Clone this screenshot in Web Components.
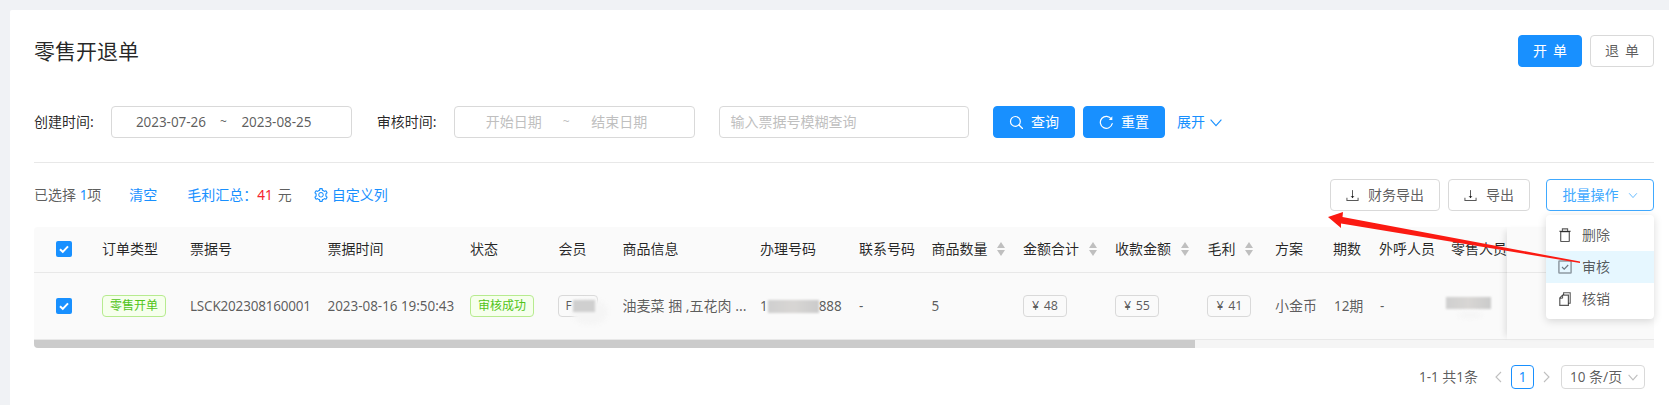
<!DOCTYPE html>
<html lang="zh">
<head>
<meta charset="utf-8">
<title>零售开退单</title>
<style>
  html,body{margin:0;padding:0;height:405px;overflow:hidden;background:#f0f2f5;}
  body{font-family:"Noto Sans","Noto Sans CJK SC",sans-serif;font-size:14px;line-height:22px;color:rgba(0,0,0,.65);}
</style>
</head>
<body>
<retail-page>
  <page-head>
    <span slot="title">零售开退单</span>
    <ui-btn variant="primary" w="64" spaced>开单</ui-btn>
    <ui-btn w="64" spaced>退单</ui-btn>
  </page-head>

  <filter-bar>
    <field-label>创建时间:</field-label>
    <date-range>
      <lat-text slot="start">2023-07-26</lat-text>
      <lat-text slot="end">2023-08-25</lat-text>
    </date-range>
    <field-label gap>审核时间:</field-label>
    <date-range empty>
      <span slot="start">开始日期</span>
      <span slot="end">结束日期</span>
    </date-range>
    <text-box gap placeholder="输入票据号模糊查询"></text-box>
    <ui-btn gap variant="primary" w="82" tight><ui-icon name="search" size="14"></ui-icon>查询</ui-btn>
    <ui-btn mini variant="primary" w="82" tight><ui-icon name="reload" size="14"></ui-icon>重置</ui-btn>
    <text-link expand>展开<ui-icon name="chev" size="14"></ui-icon></text-link>
  </filter-bar>

  <list-toolbar>
    <span slot="info">已选择 <blue-text><lat-text>1</lat-text></blue-text>项</span>
    <blue-text slot="info" style="margin-left:28px">清空</blue-text>
    <span slot="info" style="margin-left:30px"><blue-text>毛利汇总：</blue-text><red-text><lat-text>41</lat-text></red-text><span style="margin-left:5px">元</span></span>
    <blue-text slot="info" style="margin-left:22px;display:inline-flex;align-items:center;gap:4px"><ui-icon name="gear" size="14"></ui-icon>自定义列</blue-text>
    <ui-btn slot="actions" w="110"><ui-icon name="download" size="13"></ui-icon>财务导出</ui-btn>
    <ui-btn slot="actions" w="82"><ui-icon name="download" size="13"></ui-icon>导出</ui-btn>
    <ui-btn slot="actions" w="108" variant="open" style="margin-left:8px">批量操作<ui-icon name="chev" size="10"></ui-icon></ui-btn>
  </list-toolbar>

  <data-table>
    <t-row head>
      <t-cell check><ui-check></ui-check></t-cell>
      <t-cell>订单类型</t-cell>
      <t-cell>票据号</t-cell>
      <t-cell>票据时间</t-cell>
      <t-cell>状态</t-cell>
      <t-cell>会员</t-cell>
      <t-cell>商品信息</t-cell>
      <t-cell>办理号码</t-cell>
      <t-cell>联系号码</t-cell>
      <t-cell sort>商品数量</t-cell>
      <t-cell sort>金额合计</t-cell>
      <t-cell sort>收款金额</t-cell>
      <t-cell sort>毛利</t-cell>
      <t-cell>方案</t-cell>
      <t-cell>期数</t-cell>
      <t-cell>外呼人员</t-cell>
      <t-cell>零售人员</t-cell>
    </t-row>
    <t-row>
      <t-cell check><ui-check></ui-check></t-cell>
      <t-cell><ui-tag tone="green">零售开单</ui-tag></t-cell>
      <t-cell><lat-text style="letter-spacing:-.2px">LSCK202308160001</lat-text></t-cell>
      <t-cell><lat-text style="letter-spacing:-.05px">2023-08-16 19:50:43</lat-text></t-cell>
      <t-cell><ui-tag tone="green">审核成功</ui-tag></t-cell>
      <t-cell style="overflow:visible"><ui-tag w="40" start style="margin-left:-1px">F<blur-patch slot="over" w="36" h="26" l="13" t="3" faint></blur-patch><blur-patch slot="over" w="22" h="12" l="14" t="4"></blur-patch></ui-tag></t-cell>
      <t-cell>油麦菜 捆 ,五花肉 ...</t-cell>
      <t-cell><lat-text>1</lat-text><blur-patch inline w="51" h="13"></blur-patch><lat-text>888</lat-text></t-cell>
      <t-cell><lat-text>-</lat-text></t-cell>
      <t-cell><lat-text>5</lat-text></t-cell>
      <t-cell><ui-tag w="44"><lat-text price>¥ 48</lat-text></ui-tag></t-cell>
      <t-cell><ui-tag w="44"><lat-text price>¥ 55</lat-text></ui-tag></t-cell>
      <t-cell><ui-tag w="44"><lat-text price>¥ 41</lat-text></ui-tag></t-cell>
      <t-cell>小金币</t-cell>
      <t-cell style="padding-left:1px"><lat-text>12</lat-text>期</t-cell>
      <t-cell style="padding-left:1px"><lat-text>-</lat-text></t-cell>
      <t-cell style="overflow:visible"><blur-patch inline w="45" h="12" style="margin-left:-5px;margin-top:-6px"></blur-patch><blur-patch w="24" h="6" l="7" t="39" faint></blur-patch></t-cell>
    </t-row>
  </data-table>

  <pager-bar>
    <lat-text slot="total">1-1</lat-text><span slot="total"> 共</span><lat-text slot="total">1</lat-text><span slot="total">条</span>
    <lat-text slot="page">1</lat-text>
    <span slot="size"><lat-text>10</lat-text> 条/页</span>
  </pager-bar>

  <drop-menu slot="overlay">
    <menu-row icon="trash">删除</menu-row>
    <menu-row icon="checkbox" active>审核</menu-row>
    <menu-row icon="copy">核销</menu-row>
  </drop-menu>
  <note-arrow slot="overlay"></note-arrow>
</retail-page>

<script>
function def(name, css, html, extra){
  class C extends HTMLElement{
    constructor(){
      super();
      const r=this.attachShadow({mode:"open"});
      r.innerHTML="<style>"+css+"</style>"+html;
    }
    connectedCallback(){ if(extra) extra(this); }
  }
  customElements.define(name,C);
}

const ICONS={
  search:'<circle cx="6.4" cy="6.4" r="4.9" fill="none" stroke="currentColor" stroke-width="1.2"/><path d="M10 10l3.6 3.6" fill="none" stroke="currentColor" stroke-width="1.3" stroke-linecap="round"/>',
  reload:'<path d="M12.4 4.1A6 6 0 1 0 13.2 8.6" fill="none" stroke="currentColor" stroke-width="1.2" stroke-linecap="round"/><path d="M13.3 1.3v3.6H9.8z" fill="currentColor"/>',
  chev:'<path d="M1.6 4.6L7 10.6l5.4-6" fill="none" stroke="currentColor" stroke-width="1.1"/>',
  download:'<path d="M7 1.2v8.4" fill="none" stroke="currentColor" stroke-width="1.1"/><path d="M4.9 7.6L7 9.9l2.1-2.3z" fill="currentColor"/><path d="M1 9.4v3h12v-3" fill="none" stroke="currentColor" stroke-width="1.1"/>',
  trash:'<path d="M2.7 3.6h8.6v9.3a.7.7 0 0 1-.7.7H3.4a.7.7 0 0 1-.7-.7z" fill="none" stroke="currentColor" stroke-width="1.2"/><path d="M1.2 3.2h11.6M4.4 3V.9h5.2V3" fill="none" stroke="currentColor" stroke-width="1.1"/>',
  checkbox:'<rect x=".9" y=".9" width="12.2" height="12.2" rx=".6" fill="#e6f7ff" stroke="#8f9aa3" stroke-width="1.5"/><path d="M4 7l2.2 2.2L10.2 5" fill="none" stroke="#6b7680" stroke-width="1.1"/>',
  copy:'<path d="M5.6 3V.8h6.6v10.4h-1.8" fill="none" stroke="currentColor" stroke-width="1.1"/><path d="M4.6 3.2h5.8v10.2H1.8V6z" fill="none" stroke="currentColor" stroke-width="1.2"/><path d="M4.6 3.4v2.8H1.9" fill="none" stroke="currentColor" stroke-width="1"/>'
};
const GEAR='M924.8 625.7l-65.5-56c3.1-19 4.7-38.4 4.7-57.8s-1.6-38.8-4.7-57.8l65.5-56a32.03 32.03 0 0 0 9.3-35.2l-.9-2.6a443.74 443.74 0 0 0-79.7-137.9l-1.8-2.1a32.12 32.12 0 0 0-35.1-9.5l-81.3 28.9c-30-24.6-63.5-44-99.7-57.6l-15.7-85a32.05 32.05 0 0 0-25.8-25.7l-2.7-.5c-52.1-9.4-106.9-9.4-159 0l-2.7.5a32.05 32.05 0 0 0-25.8 25.7l-15.8 85.4a351.86 351.86 0 0 0-99 57.4l-81.9-29.1a32 32 0 0 0-35.1 9.5l-1.8 2.1a446.02 446.02 0 0 0-79.7 137.9l-.9 2.6c-4.5 12.5-.8 26.5 9.3 35.2l66.3 56.6c-3.1 18.8-4.6 38-4.6 57.1 0 19.2 1.5 38.4 4.6 57.1L99 625.5a32.03 32.03 0 0 0-9.3 35.2l.9 2.6c18.1 50.4 44.9 96.9 79.7 137.9l1.8 2.1a32.12 32.12 0 0 0 35.1 9.5l81.9-29.1c29.8 24.5 63.1 43.9 99 57.4l15.8 85.4a32.05 32.05 0 0 0 25.8 25.7l2.7.5a449.4 449.4 0 0 0 159 0l2.7-.5a32.05 32.05 0 0 0 25.8-25.7l15.7-85a350 350 0 0 0 99.7-57.6l81.3 28.9a32 32 0 0 0 35.1-9.5l1.8-2.1c34.8-41.1 61.6-87.5 79.7-137.9l.9-2.6c4.5-12.3.8-26.3-9.3-35zM788.3 465.9c2.5 15.1 3.8 30.6 3.8 46.1s-1.3 31-3.8 46.1l-6.6 40.1 74.7 63.9a370.03 370.03 0 0 1-42.6 73.6L721 702.8l-31.4 25.8c-23.9 19.6-50.5 35-79.3 45.8l-38.1 14.3-17.9 97a377.5 377.5 0 0 1-85 0l-17.9-97.2-37.8-14.5c-28.5-10.8-55-26.2-78.7-45.7l-31.4-25.9-93.4 33.2c-17-22.9-31.2-47.6-42.6-73.6l75.5-64.5-6.5-40c-2.4-14.9-3.7-30.3-3.7-45.5 0-15.3 1.2-30.6 3.7-45.5l6.5-40-75.5-64.5c11.3-26.1 25.6-50.7 42.6-73.6l93.4 33.2 31.4-25.9c23.7-19.5 50.2-34.9 78.7-45.7l37.9-14.3 17.9-97.2c28.1-3.2 56.8-3.2 85 0l17.9 97 38.1 14.3c28.7 10.8 55.4 26.2 79.3 45.8l31.4 25.8 92.8-32.9c17 22.9 31.2 47.6 42.6 73.6L781.8 426l6.5 39.9zM512 326c-97.2 0-176 78.8-176 176s78.8 176 176 176 176-78.8 176-176-78.8-176-176-176zm79.2 255.2A111.6 111.6 0 0 1 512 614c-29.9 0-58-11.7-79.2-32.8A111.6 111.6 0 0 1 400 502c0-29.9 11.7-58 32.8-79.2C454 401.6 482.1 390 512 390c29.9 0 58 11.6 79.2 32.8A111.6 111.6 0 0 1 624 502c0 29.9-11.7 58-32.8 79.2z';

def("ui-icon",":host{display:inline-flex;flex:none;line-height:0}svg{display:block}","<svg></svg>",el=>{
  const n=el.getAttribute("name"),s=el.getAttribute("size")||14,svg=el.shadowRoot.querySelector("svg");
  svg.setAttribute("width",s);svg.setAttribute("height",s);
  if(n==="gear"){svg.setAttribute("viewBox","64 64 896 896");svg.innerHTML='<path fill="currentColor" d="'+GEAR+'"/>';}
  else{svg.setAttribute("viewBox","0 0 14 14");svg.innerHTML=ICONS[n]||"";}
});

def("lat-text",":host{font-size:13.5px;letter-spacing:-.05px}:host([price]){font-size:12.5px;word-spacing:1.5px}","<slot></slot>");
def("blue-text",":host{color:#1890ff}","<slot></slot>");
def("red-text",":host{color:#f5222d}","<slot></slot>");

def("ui-btn",`
  :host{display:inline-flex;align-items:center;justify-content:center;gap:9px;box-sizing:border-box;height:32px;flex:none;
    border:1px solid #d9d9d9;border-radius:4px;background:#fff;color:rgba(0,0,0,.65);white-space:nowrap;}
  :host([variant=primary]){background:#1890ff;border-color:#1890ff;color:#fff}
  :host([variant=open]){border-color:#40a9ff;color:#40a9ff}
  :host([gap]){margin-left:24.4px}
  :host([mini]){margin-left:8px}
  :host([tight]){gap:8px}
  :host([spaced]){letter-spacing:6px;padding-left:6px}
`,"<slot></slot>",el=>{el.style.width=el.getAttribute("w")+"px";});

def("page-head",`
  :host{display:flex;align-items:center;justify-content:space-between;height:32px}
  .t{font-size:21px;line-height:30px;color:rgba(0,0,0,.85)}
  .a{display:flex;gap:8px}
`,'<div class="t"><slot name="title"></slot></div><div class="a"><slot></slot></div>');

def("field-label",`:host{display:block;width:77.4px;flex:none;color:rgba(0,0,0,.85)}:host([gap]){margin-left:24.4px}`,"<slot></slot>");

def("date-range",`
  :host{display:flex;align-items:center;box-sizing:border-box;width:241px;height:32px;flex:none;border:1px solid #d9d9d9;border-radius:4px;background:#fff;padding-left:11px}
  :host([empty]){color:#bfbfbf;width:240.4px}
  .s{width:95px;text-align:center}.m{width:10px;text-align:center;font-size:12px}.e{width:96px;text-align:center}
`,'<div class="s"><slot name="start"></slot></div><div class="m">~</div><div class="e"><slot name="end"></slot></div>');

def("text-box",`
  :host{display:flex;align-items:center;box-sizing:border-box;width:250px;height:32px;flex:none;border:1px solid #d9d9d9;border-radius:4px;padding-left:11px;color:#bfbfbf;background:#fff}
  :host([gap]){margin-left:24px}
`,'<span></span>',el=>{el.shadowRoot.querySelector("span").textContent=el.getAttribute("placeholder");});

def("text-link",`:host{display:inline-flex;align-items:center;gap:4px;color:#1890ff;margin-left:12px;flex:none}`,"<slot></slot>");

def("filter-bar",`:host{display:flex;align-items:center;margin-top:39px;padding-bottom:24px;border-bottom:1px solid #e8e8e8}`,"<slot></slot>");

def("list-toolbar",`
  :host{display:flex;align-items:center;justify-content:space-between;height:32px;margin-top:16px}
  .i{display:flex;align-items:center}.a{display:flex;gap:8px}
`,'<div class="i"><slot name="info"></slot></div><div class="a"><slot name="actions"></slot></div>');

def("data-table",`
  :host{display:block;position:relative;margin-top:16px;
    --cols:68px 88px 137.5px 142.5px 88.5px 64px 137.5px 99px 72.4px 91.6px 92px 92.5px 67.5px 58px 46px 72px 203px;}
  .fixed{position:absolute;right:0;top:0;bottom:8px;width:147px;background:linear-gradient(#fafafa 45px,#e8e8e8 45px,#e8e8e8 46px,#fafafa 46px,#fafafa 112px,#e8e8e8 112px);box-shadow:-6px 0 6px -4px rgba(0,0,0,.11)}
  .bar{height:8px;background:#f5f5f5;border-radius:0 0 0 4px}
  .thumb{height:8px;width:1160.6px;background:#cbcbcb;border-radius:0 0 0 4px}
`,'<slot></slot><div class="bar"><div class="thumb"></div></div><div class="fixed"></div>');

def("t-row",`
  :host{display:grid;grid-template-columns:var(--cols);height:67px;box-sizing:border-box;background:#fafafa;border-bottom:1px solid #e8e8e8;color:rgba(0,0,0,.65)}
  :host([head]){height:46px;color:rgba(0,0,0,.85);padding-bottom:2px;border-radius:4px 4px 0 0}
`,"<slot></slot>");

def("t-cell",`
  :host{display:flex;align-items:center;box-sizing:border-box;min-width:0;overflow:hidden;white-space:nowrap;position:relative}
  :host([check]){padding-left:22px}
  svg{display:none;flex:none;margin-left:10px}
  :host([sort]) svg{display:block}
`,'<slot></slot><svg width="8" height="14" viewBox="0 0 8 14"><path d="M4 0l4 6H0z" fill="#bfbfbf"/><path d="M4 14L0 8h8z" fill="#bfbfbf"/></svg>');

def("ui-check",`
  :host{display:block;width:16px;height:16px;border-radius:2px;background:#1890ff;flex:none}
  svg{display:block}
`,'<svg width="16" height="16" viewBox="0 0 16 16"><path d="M4 8.2l2.8 2.7L12 5.4" fill="none" stroke="#fff" stroke-width="2"/></svg>');

def("ui-tag",`
  :host{display:inline-flex;align-items:center;justify-content:center;position:relative;box-sizing:border-box;height:22px;padding:0 7px;flex:none;font-size:12px;line-height:20px;border:1px solid #d9d9d9;border-radius:4px;background:#fafafa;color:rgba(0,0,0,.65)}
  :host([tone=green]){background:#f6ffed;border-color:#b7eb8f;color:#52c41a}
  :host([start]){justify-content:flex-start}
`,'<slot></slot><slot name="over"></slot>',el=>{const w=el.getAttribute("w");if(w){el.style.width=w+"px";el.style.padding=el.hasAttribute("start")?"0 0 0 7px":"0";}});

def("blur-patch",`
  :host{display:block;position:absolute;background:#cfcfcf;filter:blur(1px)}
  :host([inline]){display:inline-block;position:static;flex:none;background:linear-gradient(90deg,#cfcfcf,#d8d6d4 50%,#cbcbcb)}
  :host([faint]){background:#f5f5f5;border-radius:50%;filter:blur(2px)}
`,"",el=>{
  const a=n=>el.getAttribute(n);
  el.style.width=a("w")+"px";el.style.height=a("h")+"px";
  if(a("l")!==null){el.style.left=a("l")+"px";el.style.top=a("t")+"px";}
});

def("pager-bar",`
  :host{display:flex;align-items:center;justify-content:flex-end;height:24px;margin-top:17px;padding-right:9px;font-size:14px}
  .tot{margin-right:17px;white-space:pre}
  .arr{color:#bfbfbf;display:block;flex:none}
  .cur{box-sizing:border-box;width:23px;height:24px;border:1px solid #1890ff;border-radius:4px;color:#1890ff;display:flex;align-items:center;justify-content:center;margin:0 9px}
  .size{box-sizing:border-box;width:84px;height:24px;border:1px solid #d9d9d9;border-radius:4px;margin-left:11px;padding-left:8px;display:flex;align-items:center;gap:6px;white-space:nowrap}
`,`<div class="tot"><slot name="total"></slot></div>
<svg class="arr" width="7" height="12" viewBox="0 0 7 12"><path d="M6 1L1 6l5 5" fill="none" stroke="currentColor" stroke-width="1.1"/></svg>
<div class="cur"><slot name="page"></slot></div>
<svg class="arr" width="7" height="12" viewBox="0 0 7 12"><path d="M1 1l5 5-5 5" fill="none" stroke="currentColor" stroke-width="1.1"/></svg>
<div class="size"><slot name="size"></slot><svg width="10" height="7" viewBox="0 0 10 7" style="color:#bfbfbf;flex:none"><path d="M.6 .8L5 5.8l4.4-5" fill="none" stroke="currentColor" stroke-width="1.1"/></svg></div>`);

def("drop-menu",`
  :host{display:block;position:absolute;left:1546px;top:215px;width:108px;box-sizing:border-box;padding:4px 0;background:#fff;border-radius:4px;box-shadow:0 2px 8px rgba(0,0,0,.15);z-index:5}
`,"<slot></slot>");

def("menu-row",`
  :host{display:flex;align-items:center;height:32px;padding-left:12px;gap:10px;color:rgba(0,0,0,.65)}
  :host([active]){background:#e6f7ff}
`,'<slot name="i"></slot><slot></slot>',el=>{
  if(el.querySelector("ui-icon")) return;
  const ic=document.createElement("ui-icon");
  ic.setAttribute("name",el.getAttribute("icon"));
  ic.setAttribute("size","14");
  ic.setAttribute("slot","i");
  el.prepend(ic);
});

def("note-arrow",`
  :host{display:block;position:absolute;left:0;top:0;width:1669px;height:405px;pointer-events:none;z-index:6}
  svg{display:block}
`,'<svg width="1669" height="405" viewBox="0 0 1669 405"><polygon points="1328,217 1343,212 1342.5,217 1580,261.6 1580,263 1341,223.5 1341,228" fill="#fb1a12"/></svg>');

def("retail-page",`
  :host{display:block;position:relative;width:1669px;height:405px;box-sizing:border-box;padding:10px 0 0 10px;background:#f0f2f5;overflow:hidden}
  .card{height:395px;box-sizing:border-box;background:#fff;border-radius:2px 0 0 0;padding:25px 15px 0 24px}
`,'<div class="card"><slot></slot></div><slot name="overlay"></slot>');
</script>
</body>
</html>
